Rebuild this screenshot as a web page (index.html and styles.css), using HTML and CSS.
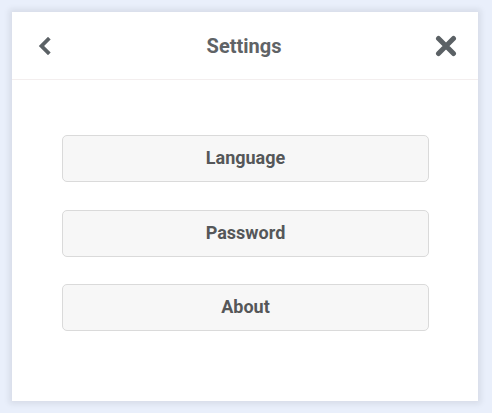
FILE: index.html
```html
<!DOCTYPE html>
<html>
<head>
<meta charset="utf-8">
<link rel="stylesheet" href="styles.css">
</head>
<body>
<div class="card">
  <header class="header">
    <button class="icon-btn back" aria-label="Back">
      <svg width="16" height="18" viewBox="0 0 16 18"><path d="M11 2.5 L4.5 9 L11 15.5" fill="none" stroke="#5b6165" stroke-width="3.8" stroke-linecap="square" stroke-linejoin="miter"/></svg>
    </button>
    <h1 class="title">Settings</h1>
    <button class="icon-btn close" aria-label="Close">
      <svg width="22" height="22" viewBox="0 0 22 22"><path d="M3.5 3.5 L18.5 18.5 M18.5 3.5 L3.5 18.5" fill="none" stroke="#5b6165" stroke-width="5" stroke-linecap="round"/></svg>
    </button>
  </header>
  <main class="menu">
    <button class="menu-btn">Language</button>
    <button class="menu-btn">Password</button>
    <button class="menu-btn">About</button>
  </main>
</div>
</body>
</html>
```
FILE: styles.css
```css
html, body {
  margin: 0;
  padding: 0;
}
body {
  background: #e9effb;
  width: 492px;
  height: 413px;
  padding: 12px 14px 12px 12px;
  box-sizing: border-box;
  font-family: Roboto, "Noto Sans", sans-serif;
}
.card {
  background: #ffffff;
  height: 389px;
  box-shadow: 0 0 6px 3px rgba(0, 0, 0, 0.08);
  display: flex;
  flex-direction: column;
}
.header {
  height: 68px;
  border-bottom: 1px solid #f3eeee;
  display: flex;
  align-items: center;
  justify-content: space-between;
  padding: 0 21px 0 25px;
  box-sizing: border-box;
}
.icon-btn {
  background: none;
  border: none;
  padding: 0;
  display: flex;
  align-items: center;
  justify-content: center;
}
.back { width: 16px; height: 18px; }
.close { width: 22px; height: 22px; }
.title {
  margin: 0;
  font-size: 20px;
  font-weight: 700;
  color: #5f6366;
}
.menu {
  display: flex;
  flex-direction: column;
  gap: 27.5px;
  padding: 55px 49px 0 50px;
}
.menu-btn {
  height: 47px;
  padding: 0 0 2px;
  background: #f7f7f7;
  border: 1px solid #dadada;
  border-radius: 5px;
  font-family: Roboto, "Noto Sans", sans-serif;
  font-size: 18px;
  font-weight: 700;
  color: #555759;
}
```
